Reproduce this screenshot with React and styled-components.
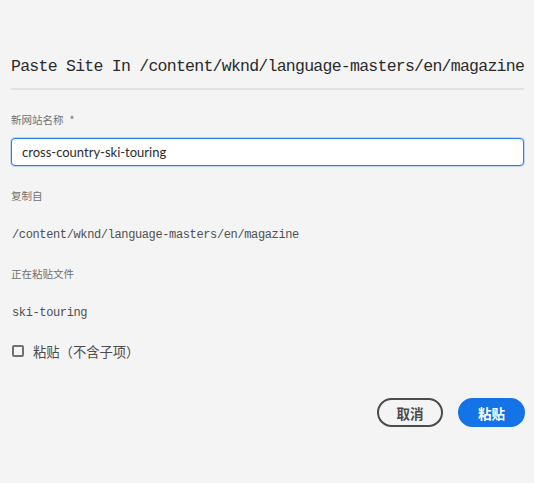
import React from "react";
import styled, { createGlobalStyle } from "styled-components";

const Global = createGlobalStyle`
  html, body { margin: 0; padding: 0; background: #f4f4f4; }
  * { box-sizing: border-box; }
`;

const Page = styled.div`
  min-height: 100vh;
  background: #f4f4f4;
  padding: 57px 10px 0 11px;
  display: flex;
  flex-direction: column;
`;

const Title = styled.h1`
  margin: 0;
  font-family: "Liberation Mono", monospace;
  font-weight: normal;
  font-size: 16.5px;
  letter-spacing: -0.74px;
  line-height: 20px;
  color: #2a2a2a;
  white-space: nowrap;
  padding-bottom: 11px;
  border-bottom: 2px solid #e2e2e2;
`;

const Label = styled.div`
  margin-top: ${(p) => p.$mt}px;
  font-family: "Noto Sans CJK SC", sans-serif;
  font-size: 10.5px;
  line-height: 14px;
  color: #707070;
`;

const Required = styled.span`
  margin-left: 6px;
`;

const Input = styled.input`
  margin-top: 11px;
  height: 28px;
  width: 100%;
  border: 1px solid #2680eb;
  box-shadow: 0 0 0 1px rgba(38, 128, 235, 0.25);
  border-radius: 4px;
  background: #fff;
  padding: 0 10px;
  font-family: "Lato", sans-serif;
  font-size: 13px;
  color: #2c2c2c;
  outline: none;
`;

const Value = styled.div`
  margin-top: 24px;
  font-family: "Liberation Mono", monospace;
  font-size: 12px;
  letter-spacing: -0.37px;
  line-height: 16px;
  color: #505050;
  padding-left: 1px;
`;

const CheckRow = styled.label`
  margin-top: 21px;
  display: flex;
  align-items: center;
  height: 18px;
  padding-left: 1px;
  font-family: "Noto Sans CJK SC", sans-serif;
  font-size: 13.3px;
  color: #4b4b4b;
`;

const Box = styled.span`
  width: 12px;
  height: 12px;
  border: 2px solid #707070;
  border-radius: 2px;
  margin-right: 9px;
  flex: none;
`;

const Actions = styled.div`
  margin-top: 38px;
  margin-right: -1px;
  display: flex;
  justify-content: flex-end;
  gap: 15px;
`;

const Button = styled.button`
  height: 29px;
  min-width: ${(p) => (p.$primary ? 67 : 66)}px;
  border-radius: 15px;
  border: 2px solid ${(p) => (p.$primary ? "#1473e6" : "#4b4b4b")};
  background: ${(p) => (p.$primary ? "#1473e6" : "transparent")};
  color: ${(p) => (p.$primary ? "#fff" : "#4b4b4b")};
  font-family: "Noto Sans CJK SC", sans-serif;
  font-weight: bold;
  font-size: 13.5px;
  padding: 0 14px;
  cursor: pointer;
`;

export default function App() {
  return (
    <>
      <Global />
      <Page>
        <Title>Paste Site In /content/wknd/language-masters/en/magazine</Title>
        <Label $mt={23}>
          新网站名称<Required>*</Required>
        </Label>
        <Input defaultValue="cross-country-ski-touring" />
        <Label $mt={23}>复制自</Label>
        <Value>/content/wknd/language-masters/en/magazine</Value>
        <Label $mt={24}>正在粘贴文件</Label>
        <Value>ski-touring</Value>
        <CheckRow>
          <Box />
          粘贴（不含子项）
        </CheckRow>
        <Actions>
          <Button>取消</Button>
          <Button $primary>粘贴</Button>
        </Actions>
      </Page>
    </>
  );
}
